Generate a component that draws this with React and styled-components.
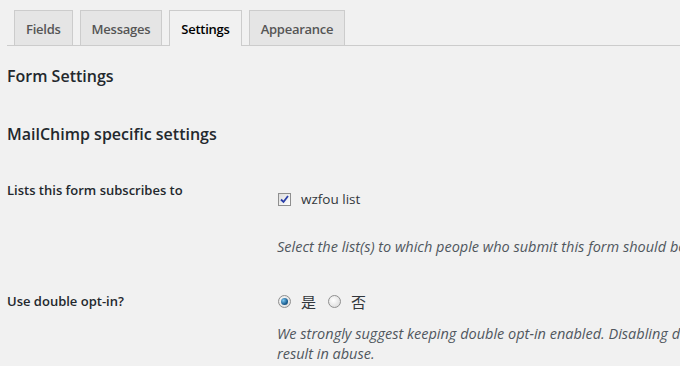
import React from 'react';
import styled, { createGlobalStyle } from 'styled-components';

const Global = createGlobalStyle`
html, body {
  margin: 0;
  padding: 0;
  background: #f1f1f1;
  overflow: hidden;
}
body {
  font-family: "Open Sans", "Noto Sans", "Noto Sans CJK SC", sans-serif;
  color: #23282d;
  font-size: 13px;
}
`;

const Wrap = styled.div`
width: 680px;
padding: 10px 0 0 7px;
box-sizing: border-box;
`;

const TabBar = styled.div`
display: flex;
gap: 7px;
padding-left: 7px;
border-bottom: 1px solid #ccc;
width: 1000px;
`;

const Tab = styled.div`
box-sizing: border-box;
padding: 2px 11px 0;
border: 1px solid #ccc;
border-bottom: none;
background: ${p => (p.active ? '#f1f1f1' : '#e5e5e5')};
color: ${p => (p.active ? '#000' : '#555')};
font-size: 13px;
letter-spacing: -0.25px;
font-weight: 600;
line-height: 33px;
margin-bottom: ${p => (p.active ? '-1px' : '0')};
height: ${p => (p.active ? '36px' : '35px')};
`;

const Heading = styled.h2`
margin: 0;
font-size: 16px;
font-weight: 600;
line-height: 22px;
color: #23282d;
padding-top: ${p => p.top}px;
`;

const Row = styled.div`
display: flex;
padding-top: ${p => p.top}px;
`;

const Label = styled.div`
width: 270px;
flex-shrink: 0;
font-size: 13px;
font-weight: 600;
line-height: 20px;
color: #23282d;
`;

const Field = styled.div`
flex-shrink: 0;
width: 700px;
`;

const Choice = styled.label`
display: flex;
align-items: center;
height: 20px;
font-size: 13.5px;
color: #32373c;
margin-top: ${p => p.top || 0}px;
`;

const Box = styled.span`
width: 11px;
height: 11px;
border: 1px solid #8f8f8f;
background: linear-gradient(135deg, #dcdcdc, #fff);
display: inline-flex;
align-items: center;
justify-content: center;
margin: 0 10px 0 1px;
`;

const Radio = styled.span`
width: 11px;
height: 11px;
border-radius: 50%;
border: 1px solid #8f8f8f;
background: radial-gradient(circle at 40% 40%, #fff, #d4d4d4);
display: inline-flex;
align-items: center;
justify-content: center;
margin: 0 10px 0 1px;
&::after {
  content: '';
  display: ${p => (p.checked ? 'block' : 'none')};
  width: 7px;
  height: 7px;
  border-radius: 50%;
  background: radial-gradient(circle at 35% 35%, #7cc6f0, #1a5f92 60%, #0b3a5e);
}
`;

const ChoiceText = styled.span`
margin-right: 11px;
font-size: ${p => (p.cjk ? '15px' : 'inherit')};
`;

const Description = styled.p`
margin: 0;
font-size: 14.5px;
font-style: italic;
line-height: 20px;
color: #50575e;
padding-top: ${p => p.top}px;
width: ${p => p.w || 700}px;
`;

const Check = () => (
  <svg width="9" height="9" viewBox="0 0 9 9">
    <path d="M1 4.5 L3.5 7 L8 1" fill="none" stroke="#2a3fa8" strokeWidth="1.8" />
  </svg>
);

export default function App() {
  return (
    <Wrap>
      <Global />
      <TabBar>
        <Tab>Fields</Tab>
        <Tab>Messages</Tab>
        <Tab active>Settings</Tab>
        <Tab>Appearance</Tab>
      </TabBar>
      <Heading top={19}>Form Settings</Heading>
      <Heading top={36}>MailChimp specific settings</Heading>
      <Row top={35}>
        <Label>Lists this form subscribes to</Label>
        <Field>
          <Choice top={9}>
            <Box><Check /></Box>
            <ChoiceText>wzfou list</ChoiceText>
          </Choice>
          <Description top={28}>
            Select the list(s) to which people who submit this form should be subscribed.
          </Description>
        </Field>
      </Row>
      <Row top={34}>
        <Label>Use double opt-in?</Label>
        <Field>
          <Choice>
            <Radio checked />
            <ChoiceText cjk>是</ChoiceText>
            <Radio />
            <ChoiceText cjk>否</ChoiceText>
          </Choice>
          <Description top={13} w={540}>
            We strongly suggest keeping double opt-in enabled. Disabling double opt-in may result in abuse.
          </Description>
        </Field>
      </Row>
    </Wrap>
  );
}
